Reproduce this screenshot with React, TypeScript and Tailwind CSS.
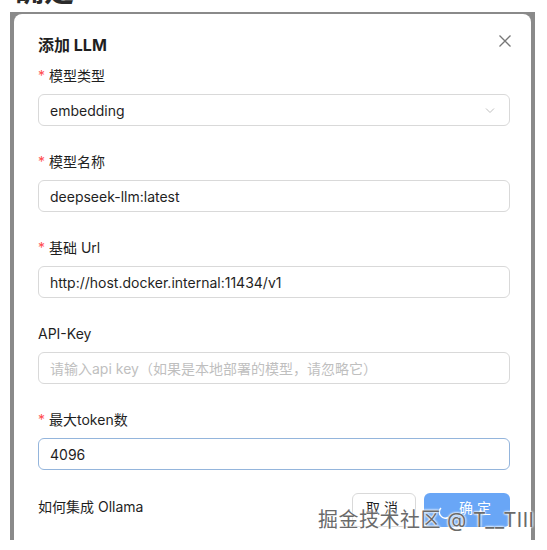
import React from 'react';

const font = { fontFamily: '"Inter", "Noto Sans CJK SC", sans-serif' };

type Field = {
  label: string;
  required?: boolean;
  value?: string;
  placeholder?: string;
  select?: boolean;
  focused?: boolean;
};

const fields: Field[] = [
  { label: '模型类型', required: true, value: 'embedding', select: true },
  { label: '模型名称', required: true, value: 'deepseek-llm:latest' },
  { label: '基础 Url', required: true, value: 'http://host.docker.internal:11434/v1' },
  { label: 'API-Key', placeholder: '请输入api key（如果是本地部署的模型，请忽略它）' },
  { label: '最大token数', required: true, value: '4096', focused: true },
];

const FormItem: React.FC<{ field: Field }> = ({ field }) => (
  <div className="mb-[24px]">
    <div className="flex h-[22px] items-center text-[14px] text-[#1f1f1f]">
      {field.required && <span className="mr-[4px] text-[14px] text-[#ff4d4f]">*</span>}
      {field.label}
    </div>
    <div
      className={`mt-[8px] flex h-[32px] items-center rounded-[6px] border bg-white px-[11px] text-[14px] ${
        field.focused ? 'border-[#94b5dc]' : 'border-[#d9d9d9]'
      }`}
    >
      {field.value ? (
        <span className="flex-1 text-[#1f1f1f]">{field.value}</span>
      ) : (
        <span className="flex-1 text-[#bfbfbf]">{field.placeholder}</span>
      )}
      {field.select && (
        <svg width="12" height="12" viewBox="0 0 12 12" fill="none" className="mr-[2px]">
          <path d="M2 4.5 L6 8.5 L10 4.5" stroke="#bfbfbf" strokeWidth="1" />
        </svg>
      )}
    </div>
  </div>
);

const App: React.FC = () => {
  return (
    <div className="relative h-[550px] w-[547px] overflow-hidden bg-white" style={font}>
      <div className="h-[10px] overflow-hidden pl-[14px]">
        <div className="-mt-[28px] text-[30px] font-bold leading-[36px] text-[#2a2a2a]">确定</div>
      </div>

      <div className="ml-[10px] mt-[2px] flex h-[528px] w-[525px] flex-col bg-[#8a8a8a] px-[4px] pt-[2px]">
        <div className="flex flex-1 flex-col rounded-t-[8px] bg-white pl-[24px] pr-[21px] pt-[19px]">
          <div className="mb-[7px] flex h-[24px] items-center justify-between">
            <span className="text-[16px] font-bold text-[#1f1f1f]">添加 LLM</span>
            <svg width="14" height="14" viewBox="0 0 14 14" className="mr-[-2px] mt-[-8px]">
              <path d="M1.5 1.5 L12.5 12.5 M12.5 1.5 L1.5 12.5" stroke="#777" strokeWidth="1.3" />
            </svg>
          </div>

          {fields.map((f) => (
            <FormItem key={f.label} field={f} />
          ))}

          <div className="-mt-[4px] flex h-[32px] items-center justify-between">
            <span className="text-[14px] text-[#1f1f1f]">如何集成 Ollama</span>
            <div className="flex gap-[8px] pt-[8px]">
              <button className="h-[34px] w-[64px] rounded-[6px] border border-[#d9d9d9] bg-white pb-[6px] text-[14px] tracking-[4px] text-[#1f1f1f]">
                取消
              </button>
              <button className="flex h-[34px] w-[86px] items-center justify-center gap-[6px] rounded-[6px] bg-[#69a6f6] pb-[6px] text-[14px] tracking-[4px] text-white">
                <svg width="14" height="14" viewBox="0 0 14 14" fill="none" className="mt-[10px]">
                  <path d="M2 3 A6 6 0 0 0 9 12.5" stroke="white" strokeWidth="1.4" />
                </svg>
                确定
              </button>
            </div>
          </div>
        </div>
      </div>

      <div
        className="absolute left-[318px] top-[505px] text-[20px] tracking-[0.5px] text-[#6a6a6a]"
        style={{ textShadow: '0 0 2px #fff, 0 0 2px #fff, 0 0 3px #fff' }}
      >
        掘金技术社区 @ T__TIII
      </div>
    </div>
  );
};

export default App;
